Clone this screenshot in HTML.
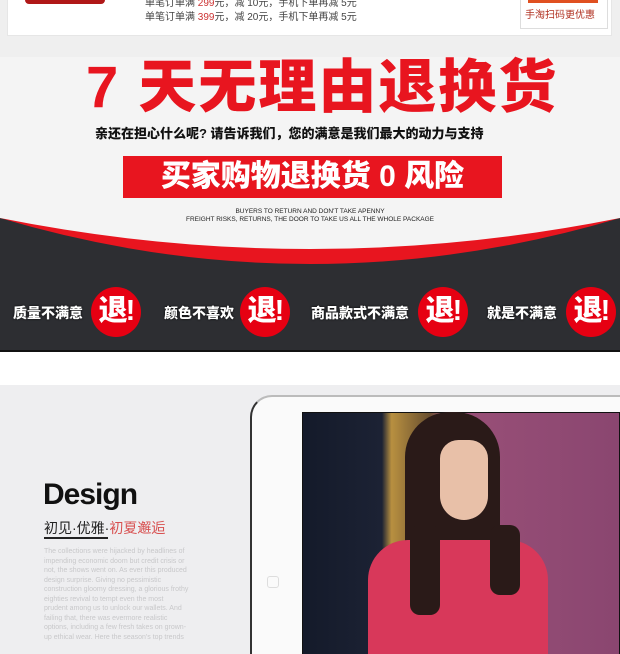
<!DOCTYPE html>
<html><head><meta charset="utf-8"><style>
*{margin:0;padding:0;box-sizing:border-box}
html,body{width:620px;height:654px;overflow:hidden}
body{background:#fff;font-family:"Liberation Sans","Noto Sans CJK SC",sans-serif;position:relative}
#w{position:absolute;left:0;top:0;width:620px;height:654px;overflow:hidden}
.a{position:absolute}
.cn{font-family:"Liberation Sans","Noto Sans CJK SC",sans-serif}
.circ{position:absolute;width:50px;height:50px;border-radius:50%;background:#e60012;color:#fff;font-weight:900;font-size:29px;line-height:48px;text-align:center;letter-spacing:-2px;top:287px}
.lab{position:absolute;top:303px;color:#fff;font-weight:900;font-size:14px;text-shadow:0 0 2px #000}
</style></head><body><div id="w">
<div class="a" style="left:0;top:0;width:620px;height:57px;background:#efefef"></div>
<div class="a" style="left:7px;top:0;width:605px;height:36px;background:#fff;border:1px solid #e6e6e6;border-top:none"></div>
<div class="a" style="left:25px;top:0;width:80px;height:4px;background:#b01818;border-radius:0 0 4px 4px"></div>
<div class="a cn" style="left:145px;top:-6px;font-size:10px;color:#444">单笔订单满 <span style="color:#c33">299</span>元，减 10元，手机下单再减 5元</div>
<div class="a cn" style="left:145px;top:11px;font-size:10px;color:#444;line-height:14px">单笔订单满 <span style="color:#c33">399</span>元，减 20元，手机下单再减 5元</div>
<div class="a" style="left:520px;top:0;width:88px;height:29px;border:1px solid #ddd;border-top:none;background:#fff"></div>
<div class="a" style="left:528px;top:0;width:70px;height:3px;background:#e05020"></div>
<div class="a cn" style="left:525px;top:9px;font-size:10px;color:#b03020;line-height:14px">手淘扫码更优惠</div>

<div class="a" style="left:0;top:57px;width:620px;height:295px;background:#f4f4f4"></div>
<svg class="a" style="left:0;top:210px" width="620" height="142">
<rect x="0" y="0" width="620" height="142" fill="#2d2e32"/>
<path d="M0 0 L620 0 L620 8 Q310 100 0 8 Z" fill="#e8151f"/>
<path d="M0 0 L620 0 L620 8 Q310 70 0 8 Z" fill="#f4f4f4"/>
</svg>
<div class="a cn" style="left:86px;top:53px;font-size:58px;font-weight:900;color:#e8151f;letter-spacing:2px;white-space:nowrap;line-height:70px">7 天无理由退换货</div>
<div class="a cn" style="left:95px;top:123px;font-size:13px;font-weight:900;color:#111;white-space:nowrap">亲还在担心什么呢? 请告诉我们，您的满意是我们最大的动力与支持</div>
<div class="a cn" style="left:123px;top:156px;width:379px;height:42px;background:#e8151f;color:#fff;font-size:30px;font-weight:900;text-align:center;line-height:42px;white-space:nowrap">买家购物退换货 0 风险</div>
<div class="a" style="left:0;top:208px;width:620px;text-align:center;font-size:6.5px;color:#222;line-height:8px">BUYERS TO RETURN AND DON'T TAKE APENNY<br>FREIGHT RISKS, RETURNS, THE DOOR TO TAKE US ALL THE WHOLE PACKAGE</div>
<div class="lab cn" style="left:13px">质量不满意</div><div class="circ cn" style="left:91px">退!</div>
<div class="lab cn" style="left:164px">颜色不喜欢</div><div class="circ cn" style="left:240px">退!</div>
<div class="lab cn" style="left:311px">商品款式不满意</div><div class="circ cn" style="left:418px">退!</div>
<div class="lab cn" style="left:487px">就是不满意</div><div class="circ cn" style="left:566px">退!</div>
<div class="a" style="left:0;top:350px;width:620px;height:2px;background:#111"></div>

<div class="a" style="left:0;top:385px;width:620px;height:269px;background:#eeeef0"></div>
<div class="a" style="left:250px;top:395px;width:370px;height:259px;background:#fafafa;border-radius:22px 0 0 0;border-left:2px solid #333;border-top:2px solid #bbb"></div>
<div class="a" style="left:267px;top:576px;width:12px;height:12px;border:1px solid #ddd;border-radius:3px"></div>
<div class="a" style="left:302px;top:412px;width:318px;height:242px;background:linear-gradient(90deg,#141a2a 0,#1c2234 25%,#b89040 28%,#6a5030 40%,#9a5078 45%,#8a4670 100%);border:1px solid #111;border-bottom:none"></div>
<div class="a" style="left:405px;top:412px;width:95px;height:200px;background:#2a1a18;border-radius:45px 45px 10px 10px"></div>
<div class="a" style="left:440px;top:440px;width:48px;height:80px;background:#e8c0a8;border-radius:20px 20px 26px 26px"></div>
<div class="a" style="left:368px;top:540px;width:180px;height:114px;background:#d8385a;border-radius:40px 40px 0 0"></div>
<div class="a" style="left:410px;top:525px;width:30px;height:90px;background:#2a1a18;border-radius:10px"></div>
<div class="a" style="left:490px;top:525px;width:30px;height:70px;background:#2a1a18;border-radius:10px"></div>

<div class="a" style="left:43px;top:478px;font-size:30px;font-weight:700;color:#111;letter-spacing:-1px">Design</div>
<div class="a cn" style="left:44px;top:518px;font-size:14px;color:#222;white-space:nowrap">初见·优雅·<span style="color:#d85050">初夏邂逅</span></div>
<div class="a" style="left:44px;top:537px;width:64px;height:2px;background:#222"></div>
<div class="a" style="left:44px;top:547px;width:145px;font-size:7px;line-height:9.5px;color:#c8c8ca">The collections were hijacked by headlines of impending economic doom but credit crisis or not, the shows went on. As ever this produced design surprise. Giving no pessimistic construction gloomy dressing, a glorious frothy eighties revival to tempt even the most prudent among us to unlock our wallets. And failing that, there was evermore realistic options, including a few fresh takes on grown-up ethical wear. Here the season's top trends</div>
</div></body></html>
